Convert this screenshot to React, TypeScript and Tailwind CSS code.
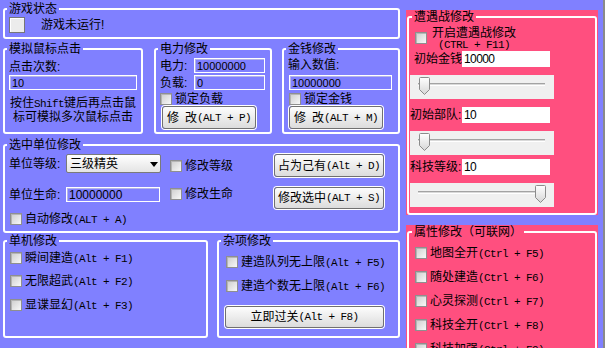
import React from "react";

type P = { className?: string; children?: React.ReactNode };

const M = ({ children }: P) => (
  <span className="font-['Liberation_Mono',monospace] text-[11px] tracking-[-0.6px]">{children}</span>
);

function Group({ title, className = "", legendClass = "ml-[2px]", children }: P & { title: string; legendClass?: string }) {
  return (
    <fieldset className={`min-w-0 rounded-[3px] border-2 border-white ${className}`}>
      <legend className={`${legendClass} px-[2px] text-[12px] leading-[14px]`}>{title}</legend>
      {children}
    </fieldset>
  );
}

function Check({ className = "" }: P) {
  return (
    <span
      className={`block h-[12px] w-[12px] shrink-0 border border-[#8f8f8f] bg-linear-to-br from-[#cdcdcd] to-[#f8f8f8] shadow-[inset_1px_1px_0_#b5b5b5] ${className}`}
    />
  );
}

function CheckRow({ className = "", children }: P) {
  return (
    <div className={`flex h-[12px] items-center ${className}`}>
      <Check />
      <span className="ml-[3px] whitespace-nowrap">{children}</span>
    </div>
  );
}

function Btn({ className = "", children }: P) {
  return (
    <div
      className={`flex items-center justify-center whitespace-nowrap rounded-[3px] border border-[#707070] bg-linear-to-b from-[#fdfdfd] to-[#dcdcdc] shadow-[0_0_0_1px_#ffffff] ${className}`}
    >
      {children}
    </div>
  );
}

function Box({ className = "", children }: P) {
  return (
    <div
      className={`flex shrink-0 items-center border border-white pl-[2px] font-['Liberation_Sans',sans-serif] shadow-[inset_1px_1px_0_#b4b4e6] ${className}`}
    >
      {children}
    </div>
  );
}

function WBox({ children }: P) {
  return (
    <div className="flex h-[16px] w-[88px] items-center bg-white pl-[2px] font-['Liberation_Sans',sans-serif] text-[12px] tracking-[-0.6px]">
      {children}
    </div>
  );
}

function Thumb({ className = "" }: P) {
  return (
    <svg className={className} width="11" height="18" viewBox="0 0 11 18">
      <defs>
        <linearGradient id="thumbg" x1="0" y1="0" x2="0" y2="1">
          <stop offset="0" stopColor="#ffffff" />
          <stop offset="1" stopColor="#d6d6d6" />
        </linearGradient>
      </defs>
      <path
        d="M1.5 0.5 H9.5 Q10.5 0.5 10.5 1.5 V12.5 L5.5 17.5 L0.5 12.5 V1.5 Q0.5 0.5 1.5 0.5 Z"
        fill="url(#thumbg)"
        stroke="#8c8c8c"
      />
    </svg>
  );
}

function Slider({ className = "", right = false }: P & { right?: boolean }) {
  return (
    <div className={`relative ml-[1px] flex h-[24px] w-[144px] flex-col bg-[#f0f0f0] ${className}`}>
      <div className="ml-[8px] mt-[8px] h-[1px] w-[127px] bg-[#a3a3a3]" />
      <div className="ml-[8px] h-[1px] w-[127px] bg-[#d9d9d9]" />
      <div className="ml-[8px] h-[1px] w-[127px] bg-white" />
      <Thumb className={`absolute top-[2px] ${right ? "left-[125px]" : "left-[9px]"}`} />
    </div>
  );
}

function Select() {
  return (
    <div className="relative flex h-[19px] w-[95px] shrink-0 items-center rounded-[2px] border border-[#7a7a7a] bg-linear-to-b from-[#ffffff] to-[#e4e4e4] pl-[3px]">
      <span>三级精英</span>
      <svg className="absolute left-[83px] top-[7px]" width="8" height="5" viewBox="0 0 8 5">
        <path d="M0 0 H8 L4 5 Z" fill="#000" />
      </svg>
    </div>
  );
}

export default function App() {
  return (
    <div className="flex h-[348px] w-[613px] overflow-hidden bg-white font-['Liberation_Sans','Noto_Sans_CJK_SC',sans-serif] text-[12px] leading-[14px] text-black">
      <div className="flex h-full w-[603px] bg-[#8080ff]">
        {/* left column */}
        <div className="ml-[3px] flex w-[397px] flex-col pt-[2px]">
          <Group title="游戏状态" className="h-[37px]">
            <div className="ml-[4px] mt-[1px] flex items-center">
              <span className="block h-[16px] w-[16px] border border-[#777777] bg-[#ececec] shadow-[inset_1px_1px_0_#ffffff]" />
              <span className="ml-[16px]">游戏未运行!</span>
            </div>
          </Group>

          <div className="mt-[3px] flex h-[92px]">
            <Group title="模拟鼠标点击" className="h-full w-[140px]">
              <div className="ml-[4px] mt-[4px]">点击次数:</div>
              <Box className="ml-[4px] mt-[1px] h-[15px] w-[128px] text-[11px]">10</Box>
              <div className="ml-[4px] mt-[7px] w-[128px] text-center leading-[13px]">
                按住<M>Shift</M>键后再点击鼠标可模拟多次鼠标点击
              </div>
            </Group>
            <Group title="电力修改" className="ml-[11px] h-full w-[118px]">
              <div className="ml-[4px] mt-[2px] flex h-[15px] items-center">
                <span className="w-[34px]">电力:</span>
                <Box className="h-[15px] w-[71px] text-[11px]">10000000</Box>
              </div>
              <div className="ml-[4px] mt-[2px] flex h-[15px] items-center">
                <span className="w-[34px]">负载:</span>
                <Box className="h-[15px] w-[71px] text-[11px]">0</Box>
              </div>
              <CheckRow className="ml-[4px] mt-[3px]">锁定负载</CheckRow>
              <Btn className="ml-[6px] mt-[1px] h-[23px] w-[94px]">
                修{"\u2002"}改<M>(ALT + P)</M>
              </Btn>
            </Group>
            <Group title="金钱修改" className="ml-[10px] h-full w-[118px]">
              <div className="ml-[4px] mt-[2px]">输入数值:</div>
              <Box className="ml-[5px] mt-[3px] h-[15px] w-[103px] text-[11px]">10000000</Box>
              <CheckRow className="ml-[5px] mt-[3px]">锁定金钱</CheckRow>
              <Btn className="ml-[5px] mt-[1px] h-[23px] w-[94px]">
                修{"\u2002"}改<M>(ALT + M)</M>
              </Btn>
            </Group>
          </div>

          <Group title="选中单位修改" className="mt-[4px] h-[95px]">
            <div className="mt-[2px] flex items-start">
              <span className="ml-[4px] flex h-[19px] w-[57px] items-center">单位等级:</span>
              <Select />
              <CheckRow className="ml-[9px] mt-[6px]">修改等级</CheckRow>
              <Btn className="ml-auto mr-[14px] h-[23px] w-[110px]">
                占为己有<M>(Alt + D)</M>
              </Btn>
            </div>
            <div className="mt-[10px] flex items-start">
              <span className="ml-[4px] flex h-[15px] w-[57px] items-center">单位生命:</span>
              <Box className="h-[15px] w-[94px] text-[12px]">10000000</Box>
              <CheckRow className="ml-[10px] mt-[1px]">修改生命</CheckRow>
              <Btn className="ml-auto mr-[14px] h-[22px] w-[110px]">
                修改选中<M>(ALT + S)</M>
              </Btn>
            </div>
            <CheckRow className="ml-[5px] mt-[4px]">
              自动修改<M>(ALT + A)</M>
            </CheckRow>
          </Group>

          <div className="mt-[1px] flex h-[104px]">
            <Group title="单机修改" className="h-full w-[205px]">
              <CheckRow className="ml-[5px] mt-[4px]">
                瞬间建造<M>(Alt + F1)</M>
              </CheckRow>
              <CheckRow className="ml-[5px] mt-[11px]">
                无限超武<M>(Alt + F2)</M>
              </CheckRow>
              <CheckRow className="ml-[5px] mt-[12px]">
                显谍显幻<M>(Alt + F3)</M>
              </CheckRow>
            </Group>
            <Group title="杂项修改" className="ml-[9px] h-full w-[183px]">
              <CheckRow className="ml-[7px] mt-[8px]">
                建造队列无上限<M>(Alt + F5)</M>
              </CheckRow>
              <CheckRow className="ml-[7px] mt-[12px]">
                建造个数无上限<M>(Alt + F6)</M>
              </CheckRow>
              <Btn className="ml-[6px] mt-[14px] h-[22px] w-[159px]">
                立即过关<M>(Alt + F8)</M>
              </Btn>
            </Group>
          </div>
        </div>

        {/* right column */}
        <div className="ml-[6px] flex w-[192px] flex-col">
          <div className="mt-[10px] h-[206px] bg-[#ff4f7f] pl-[1px]">
            <Group title="遭遇战修改" legendClass="ml-[3px]" className="h-[205px] w-[190px]">
              <div className="mt-[4px] flex items-start">
                <Check className="ml-[6px] mt-[4px]" />
                <div className="ml-[5px] text-center leading-[11px]">
                  开启遭遇战修改
                  <br />
                  <M>(CTRL + F11)</M>
                </div>
              </div>
              <div className="flex h-[16px] items-center">
                <span className="ml-[5px] w-[48px]">初始金钱</span>
                <WBox>10000</WBox>
              </div>
              <Slider className="mt-[8px]" />
              <div className="mt-[8px] flex h-[16px] items-center">
                <span className="ml-[1px] w-[52px]">初始部队:</span>
                <WBox>10</WBox>
              </div>
              <Slider className="mt-[8px]" />
              <div className="mt-[4px] flex h-[16px] items-center">
                <span className="ml-[1px] w-[52px]">科技等级:</span>
                <WBox>10</WBox>
              </div>
              <Slider className="mt-[8px]" right />
            </Group>
          </div>
          <div className="mt-[10px] flex-1 bg-[#ff4f7f] pl-[1px]">
            <Group title="属性修改（可联网）" legendClass="ml-[3px]" className="h-[150px] w-[190px]">
              <CheckRow className="ml-[6px] mt-[8px]">
                地图全开<M>(Ctrl + F5)</M>
              </CheckRow>
              <CheckRow className="ml-[6px] mt-[12px]">
                随处建造<M>(Ctrl + F6)</M>
              </CheckRow>
              <CheckRow className="ml-[6px] mt-[12px]">
                心灵探测<M>(Ctrl + F7)</M>
              </CheckRow>
              <CheckRow className="ml-[6px] mt-[12px]">
                科技全开<M>(Ctrl + F8)</M>
              </CheckRow>
              <CheckRow className="ml-[6px] mt-[12px]">
                科技加强<M>(Ctrl + F9)</M>
              </CheckRow>
            </Group>
          </div>
        </div>
      </div>
      <div className="h-full w-[2px] bg-[#8a8a8a]" />
      <div className="h-full flex-1 bg-white" />
    </div>
  );
}
